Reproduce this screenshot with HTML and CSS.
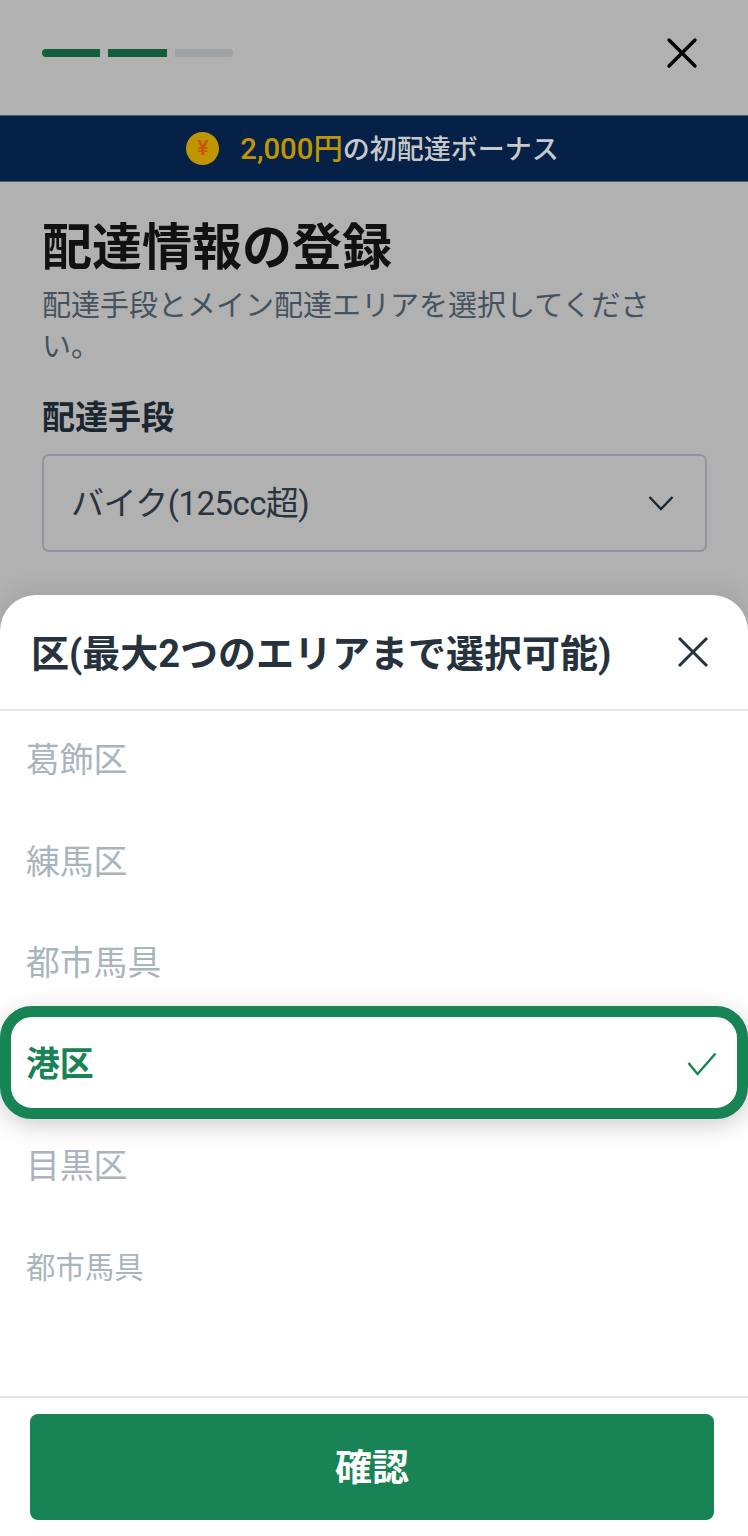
FILE: index.html
```html
<!DOCTYPE html>
<html lang="ja">
<head>
  <meta charset="UTF-8">
  <meta name="viewport" content="width=device-width, initial-scale=1.0">
  <title>配達情報の登録</title>
  <link rel="stylesheet" href="styles.css">
</head>
<body>
  <div class="page">
    <div class="top-bar">
      <div class="progress">
        <span class="step step-done"></span>
        <span class="step step-done"></span>
        <span class="step"></span>
      </div>
      <svg class="top-close" width="32" height="32" viewBox="0 0 32 32">
        <path d="M3 3 L29 29 M29 3 L3 29" fill="none" stroke="#000" stroke-width="3.4" stroke-linecap="round"/>
      </svg>
    </div>

    <div class="banner">
      <span class="coin">¥</span>
      <p class="banner-text"><span class="banner-amount">2,000円</span>の初配達ボーナス</p>
    </div>

    <div class="content">
      <h1 class="title">配達情報の登録</h1>
      <p class="subtitle">配達手段とメイン配達エリアを選択してください。</p>
      <h2 class="label">配達手段</h2>
      <div class="select">
        <span class="select-value">バイク(125cc超)</span>
        <svg width="28" height="18" viewBox="0 0 28 18">
          <path d="M2.5 3 L14 15 L25.5 3" fill="none" stroke="#1c2630" stroke-width="2.4"/>
        </svg>
      </div>
    </div>
  </div>

  <div class="sheet">
    <div class="sheet-header">
      <h2 class="sheet-title">区(最大2つのエリアまで選択可能)</h2>
      <svg width="32" height="32" viewBox="0 0 32 32">
        <path d="M2 2 L30 30 M30 2 L2 30" fill="none" stroke="#26323d" stroke-width="3"/>
      </svg>
    </div>

    <ul class="area-list">
      <li class="area">葛飾区</li>
      <li class="area">練馬区</li>
      <li class="area">都市馬具</li>
      <li class="area area-selected">
        <span class="area-name">港区</span>
        <svg width="30" height="24" viewBox="0 0 30 24">
          <path d="M1.5 11 L10.5 22 L28.5 1.5" fill="none" stroke="#188354" stroke-width="2.4"/>
        </svg>
      </li>
      <li class="area">目黒区</li>
      <li class="area area-small">都市馬具</li>
    </ul>

    <div class="sheet-footer">
      <button class="confirm" type="button">確認</button>
    </div>
  </div>
</body>
</html>
```

FILE: styles.css
```css
* {
  margin: 0;
  padding: 0;
  box-sizing: border-box;
  font-family: 'Roboto', 'Noto Sans CJK JP', sans-serif;
}

html, body {
  width: 748px;
  height: 1536px;
  overflow: hidden;
}

body {
  position: relative;
  background-color: #b1b1b1;
}

.top-bar {
  height: 115px;
  display: flex;
  align-items: center;
  justify-content: space-between;
  padding: 0 50px 10px 42px;
}

.progress {
  display: flex;
  gap: 8px;
}

.step {
  width: 58.3px;
  height: 8px;
  background-color: #9ea2a5;
}

.step:first-child {
  border-radius: 4px 0 0 4px;
}

.step:last-child {
  border-radius: 0 4px 4px 0;
}

.step-done {
  background-color: #125f3d;
}

.top-close {
  width: 32px;
  height: 32px;
}

.banner {
  height: 67px;
  display: flex;
  align-items: center;
  justify-content: center;
  gap: 21px;
  padding: 2px 3px 0 0;
  background-color: #062148;
  border-top: 1px solid #4a5f7c;
  border-bottom: 1px solid #4a5f7c;
}

.coin {
  width: 33px;
  height: 33px;
  margin-top: -2px;
  border-radius: 50%;
  background-color: #c09600;
  color: #c9570a;
  font-size: 21px;
  font-weight: 700;
  line-height: 33px;
  text-align: center;
}

.banner-text {
  color: #c9c9c9;
  font-size: 27px;
  font-weight: 500;
  line-height: 40px;
}

.banner-amount {
  color: #c09600;
  font-size: 29.3px;
}

.content {
  padding: 31px 41px 0 42px;
}

.title {
  margin-bottom: 3px;
  color: #111;
  font-size: 50px;
  font-weight: 700;
  line-height: 70px;
}

.subtitle {
  color: #46525e;
  font-size: 29px;
  line-height: 41px;
}

.label {
  margin-top: 27px;
  color: #1c2630;
  font-size: 33px;
  font-weight: 700;
  line-height: 46px;
}

.select {
  display: flex;
  align-items: center;
  justify-content: space-between;
  height: 98px;
  margin-top: 13px;
  padding: 0 30px 0 27px;
  border: 2px solid #8f969d;
  border-radius: 7px;
  color: #2a343e;
  font-size: 33px;
}

.select-value {
  margin-bottom: 4px;
  letter-spacing: -0.55px;
}

.sheet {
  position: absolute;
  left: 0;
  right: 0;
  bottom: 0;
  height: 941px;
  display: flex;
  flex-direction: column;
  background-color: #fff;
  border-radius: 36px 36px 0 0;
  box-shadow: 0 -6px 24px rgba(0, 0, 0, 0.08);
}

.sheet-header {
  height: 116px;
  display: flex;
  align-items: center;
  justify-content: space-between;
  padding: 0 39px 0 31px;
  border-bottom: 2px solid #e3e7eb;
}

.sheet-title {
  margin-bottom: 4px;
  color: #26323d;
  font-size: 38px;
  font-weight: 700;
}

.area-list {
  flex: 1;
  list-style: none;
}

.area {
  height: 101.4px;
  display: flex;
  align-items: center;
  justify-content: space-between;
  padding: 0 26px 8px;
  color: #a9b4be;
  font-size: 33.8px;
}

.area-small {
  font-size: 29.4px;
}

.area-selected {
  position: relative;
  height: 113px;
  margin: -9px 0 -2px;
  padding: 2px 20px 0 15px;
  border: 11px solid #188354;
  border-radius: 32px;
  background-color: #fff;
  color: #188354;
  font-weight: 700;
  box-shadow: 0 6px 24px rgba(0, 0, 0, 0.2);
}

.area-name {
  margin-bottom: 4px;
}

.sheet-footer {
  height: 140px;
  padding: 16px 34px 0 30px;
  border-top: 2px solid #e3e7eb;
}

.confirm {
  width: 100%;
  height: 106px;
  padding-bottom: 4px;
  border: none;
  border-radius: 8px;
  background-color: #188354;
  color: #fff;
  font-size: 37px;
  font-weight: 700;
}
```
